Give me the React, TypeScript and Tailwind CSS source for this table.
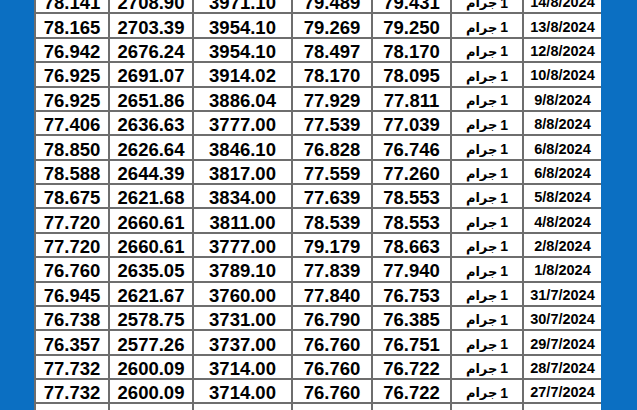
import React from 'react';

type Row = [string, string, string, string, string, string];

const rows: Row[] = [
  ['78.141', '2708.90', '3971.10', '79.489', '79.431', '14/8/2024'],
  ['78.165', '2703.39', '3954.10', '79.269', '79.250', '13/8/2024'],
  ['76.942', '2676.24', '3954.10', '78.497', '78.170', '12/8/2024'],
  ['76.925', '2691.07', '3914.02', '78.170', '78.095', '10/8/2024'],
  ['76.925', '2651.86', '3886.04', '77.929', '77.811', '9/8/2024'],
  ['77.406', '2636.63', '3777.00', '77.539', '77.039', '8/8/2024'],
  ['78.850', '2626.64', '3846.10', '76.828', '76.746', '6/8/2024'],
  ['78.588', '2644.39', '3817.00', '77.559', '77.260', '6/8/2024'],
  ['78.675', '2621.68', '3834.00', '77.639', '78.553', '5/8/2024'],
  ['77.720', '2660.61', '3811.00', '78.539', '78.553', '4/8/2024'],
  ['77.720', '2660.61', '3777.00', '79.179', '78.663', '2/8/2024'],
  ['76.760', '2635.05', '3789.10', '77.839', '77.940', '1/8/2024'],
  ['76.945', '2621.67', '3760.00', '77.840', '76.753', '31/7/2024'],
  ['76.738', '2578.75', '3731.00', '76.790', '76.385', '30/7/2024'],
  ['76.357', '2577.26', '3737.00', '76.760', '76.751', '29/7/2024'],
  ['77.732', '2600.09', '3714.00', '76.760', '76.722', '28/7/2024'],
  ['77.732', '2600.09', '3714.00', '76.760', '76.722', '27/7/2024'],
  ['', '', '', '', '', ''],
];

const num = 'flex items-center justify-center pt-[4px] border-r-2 border-[#6e6e6e] text-[18.5px] font-bold';

export default function App() {
  return (
    <div className="flex h-[410px] w-[637px] overflow-hidden bg-[#0b6fc2] font-['Liberation_Sans','DejaVu_Sans',sans-serif] text-black">
      <div className="w-[34px] shrink-0" />
      <div className="-mt-[10px] w-[567px] shrink-0 self-start border-l-2 border-[#6e6e6e] bg-white">
        {rows.map((r, i) => (
          <div key={i} className="flex h-[24.375px] border-b-2 border-[#6e6e6e]">
            <div className={`${num} w-[74px]`}>{r[0]}</div>
            <div className={`${num} w-[84px]`}>{r[1]}</div>
            <div className={`${num} w-[99px]`}>{r[2]}</div>
            <div className={`${num} w-[80px]`}>{r[3]}</div>
            <div className={`${num} w-[79px]`}>{r[4]}</div>
            <div
              dir="rtl"
              className="flex w-[72px] items-center justify-center gap-[3px] border-r-2 border-[#6e6e6e] pt-[4px] font-bold"
            >
              {r[5] ? (
                <>
                  <span className="text-[14px]">1</span>
                  <span className="font-['DejaVu_Sans',sans-serif] text-[13px] font-bold">جرام</span>
                </>
              ) : null}
            </div>
            <div className="flex w-[77px] items-center justify-center pt-[4px] text-[14.5px] font-bold">
              {r[5]}
            </div>
          </div>
        ))}
      </div>
      <div className="flex-1" />
    </div>
  );
}
